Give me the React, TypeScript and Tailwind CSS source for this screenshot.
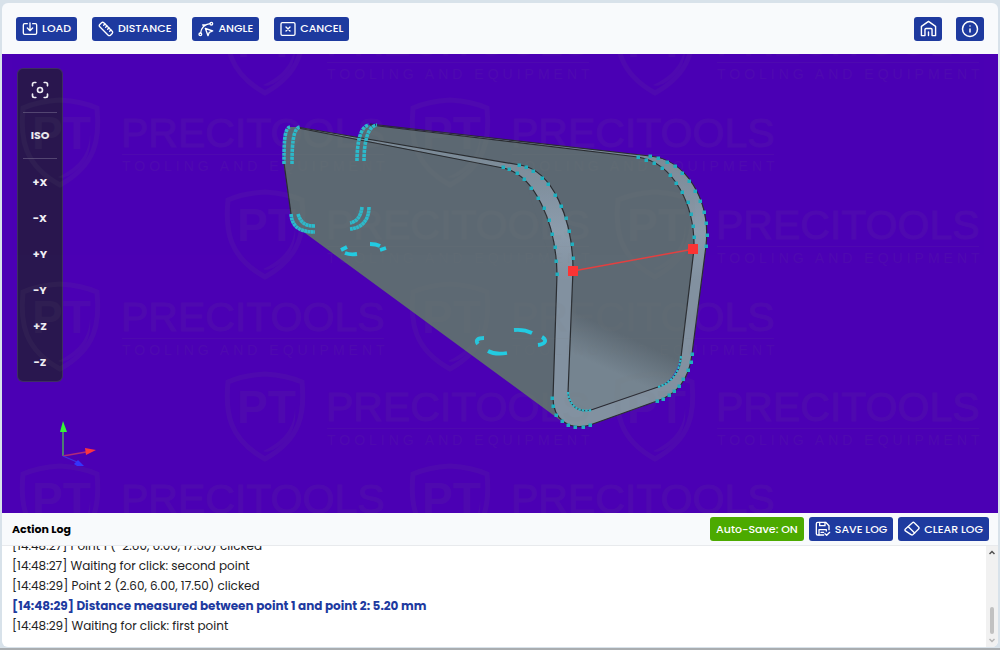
import type { ReactNode } from "react";
import { Focus, Info, Ruler } from "lucide-react";
import { clsx } from "clsx";

type Point = [number, number];

const views = ["+X", "−X", "+Y", "−Y", "+Z", "−Z"];

const logEntries = [
  { time: "14:48:27", text: "Point 1 (-2.60, 6.00, 17.50) clicked" },
  { time: "14:48:27", text: "Waiting for click: second point" },
  { time: "14:48:29", text: "Point 2 (2.60, 6.00, 17.50) clicked" },
  { time: "14:48:29", text: "Distance measured between point 1 and point 2: 5.20 mm", result: true },
  { time: "14:48:29", text: "Waiting for click: first point" },
];

// snap points along the rounded corners of the front face
const snapPoints: Point[] = [
  [503, 167], [509, 169], [517, 173], [524, 179], [531, 188], [538, 198], [544, 208], [549, 220], [552, 234], [555, 247], [556, 261], [557, 274],
  [519, 165], [526, 167], [533, 171], [542, 178], [548, 184], [555, 195], [561, 206], [566, 218], [569, 231], [572, 244], [573, 258],
  [638, 157], [646, 160], [654, 163], [662, 168], [670, 175], [676, 183], [682, 192], [688, 202], [691, 214], [693, 226], [694, 237],
  [650, 156], [658, 158], [667, 162], [675, 166], [682, 173], [689, 181], [695, 191], [700, 201], [704, 212], [706, 223], [707, 235], [706, 246],
  [692, 354], [691, 362], [688, 370], [683, 379], [679, 386], [674, 391], [669, 395], [663, 399], [657, 401],
  [552, 398], [553, 406], [556, 415], [562, 421], [568, 425], [575, 427], [583, 427], [590, 425],
];

const watermarks: Point[] = [
  [225, 5], [615, 5],
  [20, 97], [410, 97],
  [225, 189], [615, 189],
  [20, 281], [410, 281],
  [225, 371], [615, 371],
  [20, 463], [410, 463],
];

function Icon({ children, className = "size-4" }: { children: ReactNode; className?: string }) {
  return (
    <svg
      viewBox="0 0 24 24"
      className={className}
      fill="none"
      stroke="currentColor"
      strokeWidth="2"
      strokeLinecap="round"
      strokeLinejoin="round"
      aria-hidden="true"
    >
      {children}
    </svg>
  );
}

function LoadIcon() {
  return (
    <Icon>
      <path d="M8 4H4a2 2 0 0 0-2 2v12a2 2 0 0 0 2 2h16a2 2 0 0 0 2-2V6a2 2 0 0 0-2-2h-4" />
      <path d="M12 3v11M8 10.5l4 4 4-4" />
    </Icon>
  );
}

function AngleIcon() {
  return (
    <Icon>
      <circle cx="3.500" cy="20" r="2" />
      <circle cx="20" cy="4" r="2" />
      <path d="M4 18C5 10 10 5 18 4M7 6h5" />
      <path d="m11 11 11 4-5 2-2 5Z" />
    </Icon>
  );
}

function CancelIcon() {
  return (
    <Icon>
      <rect x="1.500" y="2.500" width="21" height="19" rx="2" />
      <path d="m9 9 6 6M15 9l-6 6" />
    </Icon>
  );
}

function HomeIcon() {
  return (
    <Icon className="size-[17px]">
      <path d="M2 22V9l10-7 10 7v13h-5v-8.500a1.500 1.500 0 0 0-1.500-1.500h-7A1.500 1.500 0 0 0 7 13.500V22Z" />
      <path d="M12 17v5" />
    </Icon>
  );
}

function SaveIcon() {
  return (
    <Icon>
      <path d="M13 21H4a2 2 0 0 1-2-2V4a2 2 0 0 1 2-2h12l5 5v6" />
      <path d="M7 2v5h8V2M6 21v-8h11v2M9 17h4" />
      <path d="m15 19 2.500 2.500L22 17" />
    </Icon>
  );
}

function ClearIcon() {
  return (
    <Icon>
      <path d="M12.600 2.600a2 2 0 0 1 2.800 0l6.500 6.500a2 2 0 0 1 0 2.800l-8.500 8.500a2 2 0 0 1-2.800 0L2.100 14.900a2 2 0 0 1 0-2.800Z" />
      <path d="m6.500 8.500 9.500 9.500" />
    </Icon>
  );
}

interface ActionButtonProps {
  children: ReactNode;
  icon?: ReactNode;
  color?: "blue" | "green";
}

function ActionButton({ children, icon, color = "blue" }: ActionButtonProps) {
  return (
    <button
      type="button"
      className={clsx(
        "flex h-6 items-center gap-1 rounded-[3px] px-1.5 whitespace-nowrap text-white",
        color === "blue" ? "bg-[#1e3a9f]" : "bg-[#4caa00]"
      )}
    >
      {icon}
      {children}
    </button>
  );
}

function Toolbar() {
  return (
    <header className="flex h-[51px] shrink-0 items-center justify-between bg-[#f8fafc] px-[14px] text-[11px] font-medium">
      <div className="flex gap-[15px]">
        <ActionButton icon={<LoadIcon />}>LOAD</ActionButton>
        <ActionButton icon={<Ruler className="size-4" />}>DISTANCE</ActionButton>
        <ActionButton icon={<AngleIcon />}>ANGLE</ActionButton>
        <ActionButton icon={<CancelIcon />}>CANCEL</ActionButton>
      </div>
      <div className="flex gap-[14px]">
        <button type="button" aria-label="Home" className="flex h-6 w-7 items-center justify-center rounded-[3px] bg-[#1e3a9f] text-white">
          <HomeIcon />
        </button>
        <button type="button" aria-label="Info" className="flex h-6 w-7 items-center justify-center rounded-[3px] bg-[#1e3a9f] text-white">
          <Info className="size-[18px]" />
        </button>
      </div>
    </header>
  );
}

function ViewPanel() {
  return (
    <nav className="absolute top-[14px] left-[15px] flex w-[46px] flex-col rounded-md border border-white/10 bg-[#29174f] px-[5px] pt-[3px] pb-px text-[11px] font-bold text-[#f0eef4]">
      <button type="button" aria-label="Fit to view" className="flex h-[35px] items-center justify-center">
        <Focus className="size-5" />
      </button>
      <hr className="my-[5px] border-white/20" />
      <button type="button" className="h-[35px]">ISO</button>
      <hr className="my-[5px] border-white/20" />
      {views.map((view) => (
        <button key={view} type="button" className="h-9">
          {view}
        </button>
      ))}
    </nav>
  );
}

function Model() {
  return (
    <svg viewBox="2 54 996 459" preserveAspectRatio="xMidYMid slice" className="absolute inset-0 size-full" aria-hidden="true">
      <defs>
        <linearGradient id="floor" gradientUnits="userSpaceOnUse" x1="627" y1="336" x2="611" y2="371">
          <stop offset="0" stopColor="#5d6973" />
          <stop offset="1" stopColor="#758490" />
        </linearGradient>
        <linearGradient id="face" gradientUnits="userSpaceOnUse" x1="0" y1="160" x2="0" y2="280">
          <stop offset="0" stopColor="#7c8b98" />
          <stop offset="0.600" stopColor="#8c9cac" />
          <stop offset="1" stopColor="#8291a0" />
        </linearGradient>
      </defs>

      {/* far wall */}
      <path d="M357 160C357 140 360 126 370 125L650 156C680 164 700 190 706 225L706 246L692 354L560 400Z" fill="#5d6973" />
      {/* floor seen through the opening */}
      <path d="M573 270L638 157C670 166 690 200 694 249L681 357Q675 381 658 387L591 410Q568 414 568 393Z" fill="url(#floor)" />
      {/* near wall */}
      <path
        d="M284 165C284 142 284 127 290 127L297 127L520 165L560 290L560 420L305 233Q292 226 291 213Z"
        fill="#5d6973"
      />
      {/* front face */}
      <path
        fill="url(#face)"
        fillRule="evenodd"
        d="M297 127L520 165C552 170 573 218 573 270L568 393C569 406 579 413 591 410L658 387C672 383 681 370 681 357L694 249C695 205 674 163 638 157L370 125L650 156C685 159 711 199 706 246L692 354C689 382 675 395 657 401L590 425C570 431 553 420 553 398L557 274C556 222 534 174 503 168Z"
      />
      <g fill="none" stroke="#2a2d31" strokeWidth="1.200">
        <path d="M297 127L520 165C552 170 573 218 573 270L568 393C569 406 579 413 591 410L658 387C672 383 681 370 681 357L694 249C695 205 674 163 638 157L370 125" />
        <path d="M370 124L650 156C685 159 711 199 706 246L692 354C689 382 675 395 657 401L590 425C570 431 553 420 553 398L557 274C556 222 534 174 503 168L298 128" />
        <path d="M284 163L291 214" />
      </g>

      <g fill="none" stroke="#2bbccd" strokeWidth="3.600">
        <path d="M284 164C284 145 284 128 290 127M292 164C292 145 293 128 300 127M357 161C357 144 360 126 369 125M364 161C364 144 367 126 377 125" strokeDasharray="3.200 0.800" />
        <path d="M291 214C292 227 300 232 315 232M298 214C301 223 305 226 315 226M362 207C361 217 356 222 350 223M369 207C369 220 362 228 350 229" strokeDasharray="3 0.300" />
        <path d="M568 392C569 406 579 413 592 410M658 387C672 383 680 371 681 356" strokeWidth="2.200" strokeDasharray="2.500 1" />
      </g>
      <g fill="none" stroke="#22cbe2" strokeWidth="3.800">
        <path d="M341 250L347 247M345 253Q350 255 357 254M370 244Q376 244 380 246M380 250L386 248" />
        <path d="M478 344C475 340 478 338 484 338M488 351Q495 355 507 353M514 330Q524 329 532 333M542 337C547 340 546 344 538 345" />
      </g>
      {snapPoints.map(([x, y]) => (
        <rect key={`${x}-${y}`} x={x - 1.5} y={y - 1.5} width="3.500" height="3.500" fill="#20b0c0" />
      ))}

      {/* measured distance */}
      <path d="M573 271L694 249" stroke="#e34040" strokeWidth="1.500" />
      <rect x="568" y="266" width="10" height="10" fill="#fb3434" />
      <rect x="688" y="244" width="10" height="10" fill="#fb3434" />

      {/* axes */}
      <path d="M63 456V432" stroke="#4fc04f" strokeWidth="1.300" />
      <path d="M63 421L67 432H60Z" fill="#36f436" />
      <path d="M63 456L86 452" stroke="#b02a78" strokeWidth="1.300" />
      <path d="M96 450L85 448L86 455Z" fill="#fb3440" />
      <path d="M63 456L77 462" stroke="#4030e0" strokeWidth="1.300" />
      <path d="M84 466L78 460L74 464L77 466Z" fill="#3434fb" />
    </svg>
  );
}

function Watermark() {
  return (
    <svg
      viewBox="2 54 996 459"
      preserveAspectRatio="xMidYMid slice"
      className="pointer-events-none absolute inset-0 size-full font-['Liberation_Sans',sans-serif] opacity-7"
      fill="#7c7c7c"
      stroke="#7c7c7c"
      strokeWidth="0"
      aria-hidden="true"
    >
      {watermarks.map(([x, y]) => (
        <g key={`${x}-${y}`} transform={`translate(${x} ${y})`}>
          <path
            d="M40 3C25 4 12 7 3 11C0 42 4 68 40 88C76 68 80 42 77 11C68 7 55 4 40 3Z"
            fill="none"
            strokeWidth="5"
          />
          <path d="M70 36C70 58 56 72 38 80C42 82 44 80 48 79C64 70 72 58 70 36Z" />
          <text x="12" y="52" className="text-[46px] font-bold">PT</text>
          <text x="101" y="50" strokeWidth="1" className="text-[41px]">PRECITOOLS</text>
          <rect x="102" y="57" width="262" height="1" />
          <text x="102" y="74" className="text-[14px] tracking-[4px]">TOOLING AND EQUIPMENT</text>
        </g>
      ))}
    </svg>
  );
}

function ActionLog() {
  return (
    <section className="flex shrink-0 flex-col">
      <div className="flex h-[33px] items-center justify-between border-b border-[#e8eaed] bg-[#f8fafc] pr-[9px] pl-[10px]">
        <h2 className="text-[11px] font-bold text-black">Action Log</h2>
        <div className="flex gap-[5px] text-[11px] font-medium">
          <ActionButton color="green">Auto-Save: ON</ActionButton>
          <ActionButton icon={<SaveIcon />}>SAVE LOG</ActionButton>
          <ActionButton icon={<ClearIcon />}>CLEAR LOG</ActionButton>
        </div>
      </div>
      <div className="flex h-[101px] bg-white">
        <div className="flex flex-1 flex-col justify-end overflow-hidden pb-[11px] pl-[10px] text-[12px] leading-5 text-[#222]">
          {logEntries.map((entry) => (
            <p
              key={entry.text}
              className={clsx("shrink-0 whitespace-nowrap", entry.result && "font-bold text-[#1e3a9f]")}
            >
              [{entry.time}] {entry.text}
            </p>
          ))}
        </div>
        <div className="flex w-3 flex-col items-center justify-between bg-[#f1f1f1] py-1">
          <svg viewBox="0 0 6 5" className="h-[5px] w-[6px]" fill="none" stroke="#505050" strokeWidth="1.500" aria-hidden="true">
            <path d="M0.500 4L3 1.500L5.500 4" />
          </svg>
          <div className="mt-auto mb-1 h-[27px] w-1 rounded-full bg-[#c1c1c1]" />
          <svg viewBox="0 0 6 5" className="h-[5px] w-[6px]" fill="none" stroke="#b5b5b5" strokeWidth="1.500" aria-hidden="true">
            <path d="M0.500 1L3 3.500L5.500 1" />
          </svg>
        </div>
      </div>
    </section>
  );
}

export default function App() {
  return (
    <div className="flex h-screen flex-col border-b-2 border-[#a9adb0] bg-[#d8e2ea] px-[2px] pt-[3px] pb-px font-['Poppins',Inter,sans-serif]">
      <div className="flex min-h-0 flex-1 flex-col overflow-hidden rounded-md">
        <Toolbar />
        <main className="relative min-h-0 flex-1 overflow-hidden bg-[#4b00b4]">
          <Model />
          <ViewPanel />
          <Watermark />
        </main>
        <ActionLog />
      </div>
    </div>
  );
}
